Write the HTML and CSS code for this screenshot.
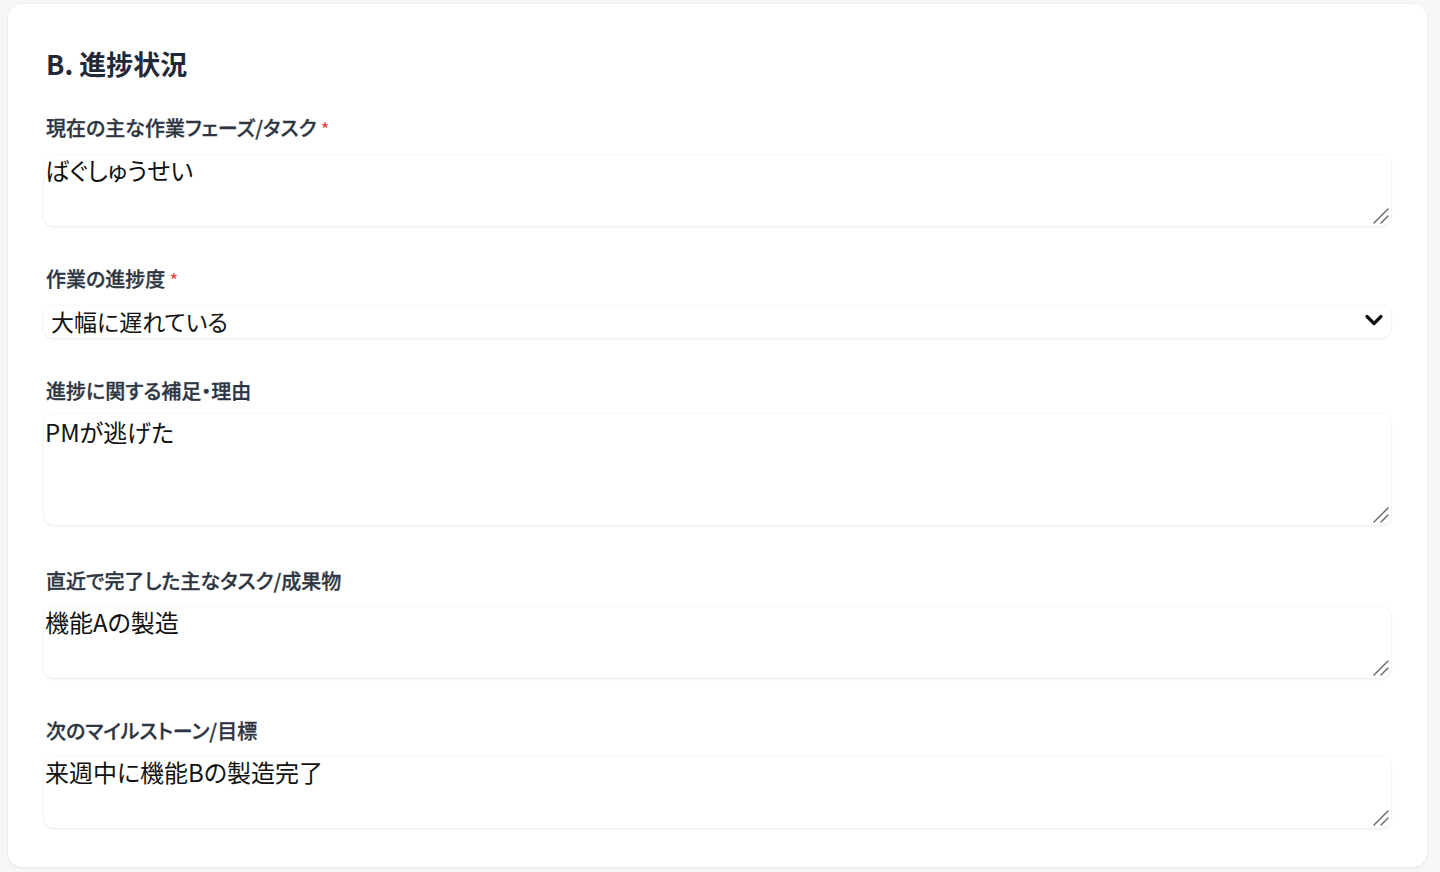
FILE: index.html
```html
<!DOCTYPE html>
<html lang="ja">
<head>
<meta charset="utf-8">
<title>B. 進捗状況</title>
<link rel="stylesheet" href="styles.css">
</head>
<body>
<section class="card">
  <h2 class="title">B. 進捗状況</h2>
  <div class="fields">
    <div class="field">
      <label class="label">現在の主な作業フェーズ/タスク <span class="req">*</span></label>
      <div class="ta-wrap">
        <textarea class="input h2" rows="2">ばぐしゅうせい</textarea>
        <svg class="grip" width="18" height="18" viewBox="0 0 18 18" aria-hidden="true"><path d="M2 16 L16 2 M9 16 L16 9" stroke="#6e6e6e" stroke-width="1.5" stroke-linecap="round" fill="none"/></svg>
      </div>
    </div>
    <div class="field">
      <label class="label">作業の進捗度 <span class="req">*</span></label>
      <div class="select-wrap">
        <select class="select">
          <option>大幅に遅れている</option>
        </select>
        <svg class="chev" width="20" height="14" viewBox="0 0 20 14" aria-hidden="true"><path d="M3 3.5 L10 10.5 L17 3.5" fill="none" stroke="#111" stroke-width="3.2" stroke-linecap="round" stroke-linejoin="round"/></svg>
      </div>
    </div>
    <div class="field field-tall">
      <label class="label">進捗に関する補足・理由</label>
      <div class="ta-wrap">
        <textarea class="input h3" rows="3">PMが逃げた</textarea>
        <svg class="grip" width="18" height="18" viewBox="0 0 18 18" aria-hidden="true"><path d="M2 16 L16 2 M9 16 L16 9" stroke="#6e6e6e" stroke-width="1.5" stroke-linecap="round" fill="none"/></svg>
      </div>
    </div>
    <div class="field">
      <label class="label">直近で完了した主なタスク/成果物</label>
      <div class="ta-wrap">
        <textarea class="input h2" rows="2">機能Aの製造</textarea>
        <svg class="grip" width="18" height="18" viewBox="0 0 18 18" aria-hidden="true"><path d="M2 16 L16 2 M9 16 L16 9" stroke="#6e6e6e" stroke-width="1.5" stroke-linecap="round" fill="none"/></svg>
      </div>
    </div>
    <div class="field">
      <label class="label">次のマイルストーン/目標</label>
      <div class="ta-wrap">
        <textarea class="input h2" rows="2">来週中に機能Bの製造完了</textarea>
        <svg class="grip" width="18" height="18" viewBox="0 0 18 18" aria-hidden="true"><path d="M2 16 L16 2 M9 16 L16 9" stroke="#6e6e6e" stroke-width="1.5" stroke-linecap="round" fill="none"/></svg>
      </div>
    </div>
  </div>
</section>
</body>
</html>
```

FILE: styles.css
```css
html, body {
  margin: 0;
  padding: 0;
}
body {
  background: #f6f7f9;
  padding: 4px 13px 5px 8px;
  font-family: "Noto Sans CJK JP", "Noto Sans", sans-serif;
  font-feature-settings: "palt";
  color: #111827;
  box-sizing: border-box;
  height: 872px;
}
.card {
  background: #ffffff;
  border-radius: 14px;
  box-shadow: 0 1px 3px rgba(0,0,0,0.07), 0 0 0 1px rgba(0,0,0,0.015);
  padding: 40px 36px 36px 36px;
  box-sizing: border-box;
  height: 863px;
}
.title {
  margin: 0 0 29px 2px;
  font-size: 27px;
  line-height: 40px;
  font-weight: 700;
  color: #1f2937;
}
.fields {
  display: flex;
  flex-direction: column;
  gap: 38px;
}
.field {
  display: flex;
  flex-direction: column;
}
.label {
  font-size: 20px;
  line-height: 30px;
  font-weight: 500;
  color: #2d3542;
  margin: 0 0 11px 2px;
  -webkit-text-stroke: 0.3px #2d3542;
}
.field-tall {
  padding-bottom: 3px;
}
.field-tall .label {
  margin-bottom: 8px;
}
.req {
  color: #ef4444;
  font-size: 17px;
  -webkit-text-stroke: 0;
}
.ta-wrap {
  position: relative;
}
.input {
  display: block;
  width: 100%;
  box-sizing: border-box;
  border: none;
  outline: none;
  border-radius: 9px;
  box-shadow: 0 1px 3px rgba(0,0,0,0.07), 0 0 0 1px rgba(0,0,0,0.02);
  background: #fff;
  font-family: "Noto Sans CJK JP", "Noto Sans", sans-serif;
  font-feature-settings: "palt";
  font-size: 24px;
  line-height: 29px;
  color: #111;
  padding: 0 0 0 1px;
  margin: 0;
  resize: none;
}
.h2 { height: 71px; }
.h3 { height: 111px; }
.field-tall .input {
  padding-top: 3px;
}
.grip {
  position: absolute;
  right: 1px;
  bottom: 1px;
  pointer-events: none;
}
.select-wrap {
  position: relative;
}
.select {
  display: block;
  width: 100%;
  height: 32px;
  box-sizing: border-box;
  appearance: none;
  -webkit-appearance: none;
  border: none;
  outline: none;
  border-radius: 9px;
  box-shadow: 0 1px 3px rgba(0,0,0,0.07), 0 0 0 1px rgba(0,0,0,0.02);
  background: #fff;
  font-family: "Noto Sans CJK JP", "Noto Sans", sans-serif;
  font-feature-settings: "palt";
  font-size: 23px;
  line-height: 28px;
  color: #111;
  padding: 0 40px 3px 7px;
  margin: 0;
}
.chev {
  position: absolute;
  right: 7px;
  top: 7px;
  pointer-events: none;
}
```
